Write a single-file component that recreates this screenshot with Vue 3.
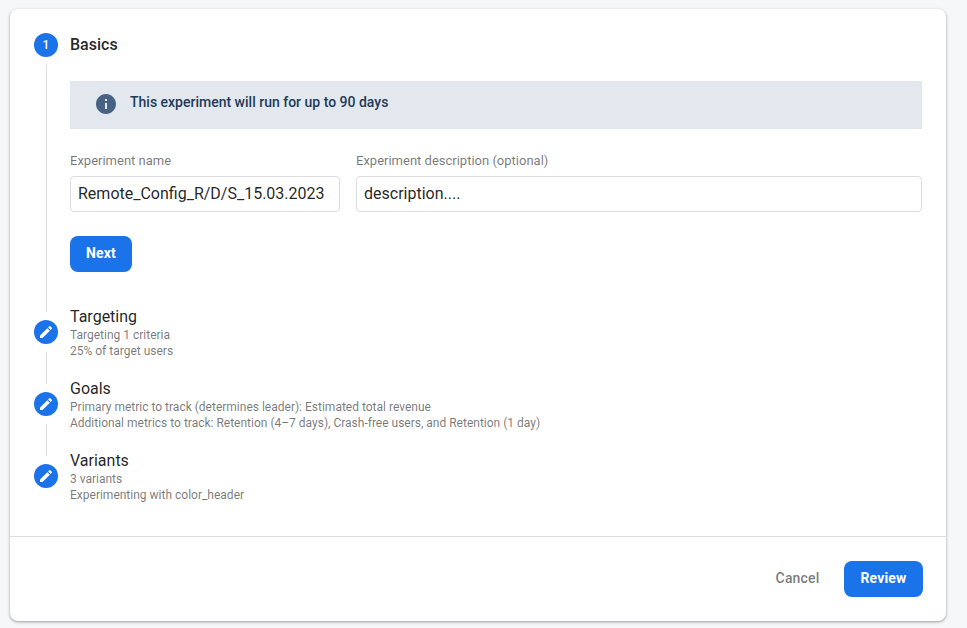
<script setup>
import { ref } from 'vue'

const name = ref('Remote_Config_R/D/S_15.03.2023')
const description = ref('description....')

const steps = [
  { title: 'Targeting', lines: ['Targeting 1 criteria', '25% of target users'] },
  {
    title: 'Goals',
    lines: [
      'Primary metric to track (determines leader): Estimated total revenue',
      'Additional metrics to track: Retention (4–7 days), Crash-free users, and Retention (1 day)',
    ],
  },
  { title: 'Variants', lines: ['3 variants', 'Experimenting with color_header'] },
]
</script>

<template>
  <main class="page">
    <section class="card">
      <div class="steps">
        <div class="step current">
          <div class="rail">
            <span class="dot">1</span>
            <span class="line"></span>
          </div>
          <div class="body">
            <h2 class="title active">Basics</h2>
            <div class="banner">
              <svg class="info" viewBox="2 2 20 20">
                <path d="M12 2C6.48 2 2 6.48 2 12s4.48 10 10 10 10-4.48 10-10S17.52 2 12 2zm1 15h-2v-6h2v6zm0-8h-2V7h2v2z" />
              </svg>
              <span class="banner-text">This experiment will run for up to 90 days</span>
            </div>
            <div class="fields">
              <label class="field">
                <span class="label">Experiment name</span>
                <input v-model="name" class="input" type="text" />
              </label>
              <label class="field">
                <span class="label">Experiment description (optional)</span>
                <input v-model="description" class="input" type="text" />
              </label>
            </div>
            <button class="btn primary next">Next</button>
          </div>
        </div>

        <div v-for="(step, i) in steps" :key="step.title" class="step">
          <div class="rail">
            <span class="dot">
              <svg class="pencil" viewBox="0 0 24 24">
                <path d="M3 17.25V21h3.75L17.81 9.94l-3.75-3.75L3 17.25zM20.71 7.04a.996.996 0 0 0 0-1.41l-2.34-2.34a.996.996 0 0 0-1.41 0l-1.83 1.83 3.75 3.75 1.83-1.83z" />
              </svg>
            </span>
            <span v-if="i < steps.length - 1" class="line"></span>
          </div>
          <div class="body summary">
            <h2 class="title">{{ step.title }}</h2>
            <p v-for="text in step.lines" :key="text" class="detail">{{ text }}</p>
          </div>
        </div>
      </div>

      <footer class="footer">
        <button class="btn cancel">Cancel</button>
        <button class="btn primary review">Review</button>
      </footer>
    </section>
  </main>
</template>

<style>
body {
  background: #f5f7f9;
}
</style>

<style scoped>
.page,
.page * {
  box-sizing: border-box;
}

.page {
  height: 628px;
  padding: 9px 21px 7px 10px;
  overflow: hidden;
  background: #f5f7f9;
  font-family: Roboto, sans-serif;
  color: rgba(0, 0, 0, 0.87);
}

.card {
  display: flex;
  flex-direction: column;
  height: 612px;
  border-radius: 8px;
  background: #fff;
  box-shadow: 0 1px 2px rgba(60, 64, 67, 0.3), 0 1px 3px 1px rgba(60, 64, 67, 0.15);
}

.steps {
  flex: 1;
  padding: 24px 24px 0;
}

.step {
  display: flex;
  gap: 12px;
  height: 72px;
}

.step.current {
  height: 287px;
}

.rail {
  display: flex;
  flex-direction: column;
  align-items: center;
  width: 24px;
}

.dot {
  display: flex;
  flex: none;
  align-items: center;
  justify-content: center;
  width: 24px;
  height: 24px;
  border-radius: 50%;
  background: #1a73e8;
  color: #fff;
  font-size: 12px;
  font-weight: 500;
}

.pencil {
  width: 16px;
  height: 16px;
  fill: #fff;
}

.line {
  flex: 1;
  width: 1px;
  margin: 8px 0 8px 1px;
  background: #dadce0;
}

.body {
  flex: 1;
  min-width: 0;
}

.summary {
  margin-top: -15px;
}

.title {
  margin: 0;
  padding-top: 2px;
  font-size: 16px;
  font-weight: 400;
  line-height: 20px;
}

.title.active {
  font-weight: 500;
}

.banner {
  display: flex;
  align-items: center;
  gap: 14px;
  height: 48px;
  margin-top: 26px;
  padding: 0 26px 2px;
  background: #e3e8ef;
}

.info {
  width: 20px;
  height: 20px;
  fill: #476282;
}

.banner-text {
  margin-top: -4px;
  color: #1f3a57;
  font-size: 14px;
  font-weight: 500;
  line-height: 20px;
}

.fields {
  display: grid;
  grid-template-columns: 270px 1fr;
  gap: 16px;
  margin-top: 24px;
}

.field {
  display: flex;
  flex-direction: column;
  gap: 7px;
}

.label {
  color: rgba(0, 0, 0, 0.54);
  font-size: 13px;
  line-height: 16px;
}

.input {
  width: 100%;
  height: 36px;
  padding: 0 7px 2px;
  border: 1px solid #dadce0;
  border-radius: 4px;
  outline: none;
  background: #fff;
  color: rgba(0, 0, 0, 0.87);
  font-family: inherit;
  font-size: 16px;
}

.btn {
  height: 36px;
  padding: 0 0 2px;
  border: 0;
  border-radius: 8px;
  font-family: inherit;
  font-size: 14px;
  font-weight: 500;
  letter-spacing: 0.15px;
}

.primary {
  background: #1a73e8;
  color: #fff;
}

.next {
  display: block;
  width: 62px;
  margin-top: 24px;
  font-weight: 700;
}

.detail {
  margin: 0;
  color: rgba(0, 0, 0, 0.54);
  font-size: 12px;
  line-height: 16px;
}

.footer {
  display: flex;
  justify-content: flex-end;
  height: 85px;
  padding: 24px 23px 0;
  border-top: 1px solid #dadce0;
}

.cancel {
  width: 77px;
  margin-right: 8px;
  background: transparent;
  color: rgba(0, 0, 0, 0.54);
}

.review {
  width: 79px;
  font-weight: 700;
}
</style>
